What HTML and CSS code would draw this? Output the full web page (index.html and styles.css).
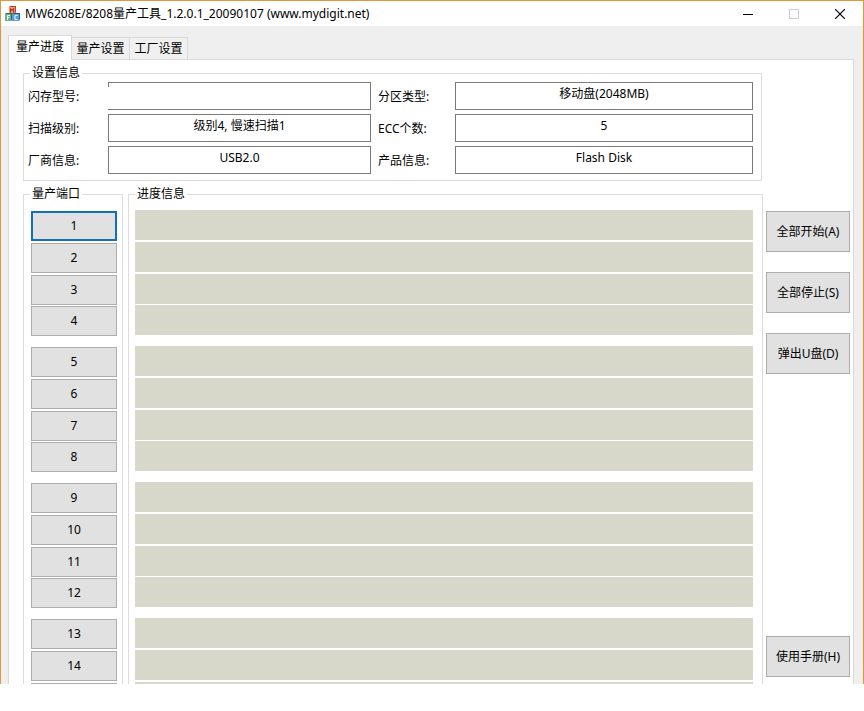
FILE: index.html
```
<!DOCTYPE html>
<html lang="zh-CN">
<head>
  <meta charset="UTF-8" />
  <meta name="viewport" content="width=device-width, initial-scale=1.0"/>
  <title>MW6208E/8208量产工具</title>
  <link rel="stylesheet" href="styles.css">
</head>
<body>

  <div class="window">
    <header class="title-bar">
      <svg class="app-icon" width="16" height="16" viewBox="0 0 16 16" aria-hidden="true">
        <path d="M4 1l1-1h6v6l-1 2H4z" fill="#a8472a"/>
        <rect x="4" y="1" width="6" height="7" fill="#f0976c"/>
        <path d="M5.500 6.500v-4l1.500 2l1.500-2v4" fill="none" stroke="#b5281a"/>
        <path d="M0 8l1-1h6v7l-1 1H0z" fill="#2c6b55"/>
        <rect x="0" y="8" width="6" height="7" fill="#69b095"/>
        <path d="M2.500 14v-4.500H5M2.500 11.500H4.500" fill="none" stroke="#eefae6"/>
        <path d="M7 8l1-1h7v6l-1 2H7z" fill="#2a5f96"/>
        <rect x="7" y="8" width="7" height="7" fill="#5a9fd8"/>
        <path d="M12.500 9.500h-2.500v4h2.500" fill="none" stroke="#eef8ff"/>
      </svg>
      <h1>MW6208E/8208量产工具_1.2.0.1_20090107 (www.mydigit.net)</h1>
      <div class="window-buttons">
        <button type="button" aria-label="最小化">
          <svg width="10" height="10" viewBox="0 0 10 10"><path d="M0 5.500H10" stroke="#000"/></svg>
        </button>
        <button type="button" aria-label="最大化" disabled>
          <svg width="10" height="10" viewBox="0 0 10 10"><path d="M.5.5h9v9h-9z" fill="none" stroke="#ccc"/></svg>
        </button>
        <button type="button" aria-label="关闭">
          <svg width="10" height="10" viewBox="0 0 10 10"><path d="M0 0L10 10M10 0L0 10" stroke="#000" stroke-width="1.200"/></svg>
        </button>
      </div>
    </header>

    <nav class="tabs" role="tablist">
      <button type="button" role="tab" class="tab active" aria-selected="true">量产进度</button>
      <button type="button" role="tab" class="tab" aria-selected="false">量产设置</button>
      <button type="button" role="tab" class="tab" aria-selected="false">工厂设置</button>
    </nav>

    <main class="panel">
      <fieldset class="group settings">
        <legend>设置信息</legend>
        <div class="settings-grid">
          <label for="flashType">闪存型号:</label>
          <input type="text" id="flashType" class="flash-type" readonly>
          <label for="partition">分区类型:</label>
          <input type="text" id="partition" value="移动盘(2048MB)" readonly>

          <label for="scanLevel">扫描级别:</label>
          <input type="text" id="scanLevel" value="级别4, 慢速扫描1" readonly>
          <label for="eccCount">ECC个数:</label>
          <input type="text" id="eccCount" value="5" readonly>

          <label for="vendor">厂商信息:</label>
          <input type="text" id="vendor" value="USB2.0" readonly>
          <label for="product">产品信息:</label>
          <input type="text" id="product" value="Flash Disk" readonly>
        </div>
      </fieldset>

      <div class="work-area">
        <fieldset class="group ports">
          <legend>量产端口</legend>
          <div class="slots">
            <button type="button" class="slot current">1</button>
            <button type="button" class="slot">2</button>
            <button type="button" class="slot">3</button>
            <button type="button" class="slot">4</button>
            <button type="button" class="slot">5</button>
            <button type="button" class="slot">6</button>
            <button type="button" class="slot">7</button>
            <button type="button" class="slot">8</button>
            <button type="button" class="slot">9</button>
            <button type="button" class="slot">10</button>
            <button type="button" class="slot">11</button>
            <button type="button" class="slot">12</button>
            <button type="button" class="slot">13</button>
            <button type="button" class="slot">14</button>
            <button type="button" class="slot"></button>
          </div>
        </fieldset>

        <fieldset class="group progress">
          <legend>进度信息</legend>
          <div class="slots">
            <div class="slot"></div>
            <div class="slot"></div>
            <div class="slot"></div>
            <div class="slot"></div>
            <div class="slot"></div>
            <div class="slot"></div>
            <div class="slot"></div>
            <div class="slot"></div>
            <div class="slot"></div>
            <div class="slot"></div>
            <div class="slot"></div>
            <div class="slot"></div>
            <div class="slot"></div>
            <div class="slot"></div>
            <div class="slot"></div>
          </div>
        </fieldset>

        <div class="actions">
          <button type="button">全部开始(A)</button>
          <button type="button">全部停止(S)</button>
          <button type="button">弹出U盘(D)</button>
          <button type="button" class="manual">使用手册(H)</button>
        </div>
      </div>
    </main>
  </div>

</body>
</html>
```
FILE: styles.css
```
* { box-sizing: border-box; }
body {
  margin: 0;
  background: #fff;
  color: #000;
  font: 12px/16px "Noto Sans", "Noto Sans CJK SC", sans-serif;
}
button, input {
  font: inherit;
  color: inherit;
  border-radius: 0;
  padding: 0;
  margin: 0;
}

/* window frame, runs past its visible bottom edge */
.window {
  display: flex;
  flex-direction: column;
  height: calc(100vh - 27px);
  min-height: 400px;
  overflow: hidden;
  border: 1px solid #e29640;
  border-bottom: none;
  background: #efefef;
}
.title-bar {
  display: flex;
  align-items: center;
  flex: none;
  height: 25px;
  padding-left: 4px;
  background: #fff;
}
.app-icon {
  flex: none;
  margin-right: 4px;
}
.title-bar h1 {
  flex: 1;
  margin: 0;
  font-size: 12px;
  font-weight: normal;
  white-space: nowrap;
}
.window-buttons {
  display: flex;
}
.window-buttons button {
  display: flex;
  align-items: center;
  justify-content: center;
  width: 46px;
  height: 25px;
  border: none;
  background: none;
}

.tabs {
  display: flex;
  align-items: flex-end;
  flex: none;
  padding: 9px 7px 0;
}
.tab {
  width: 58px;
  height: 22px;
  border: 1px solid #d9d9d9;
  border-left: none;
  border-bottom: none;
  background: #f0f0f0;
  white-space: nowrap;
}
.tab.active {
  position: relative;
  width: 64px;
  height: 25px;
  margin-bottom: -1px;
  padding-bottom: 2px;
  border-left: 1px solid #d9d9d9;
  background: #fff;
}

.panel {
  display: flex;
  flex-direction: column;
  flex: 1;
  min-height: 0;
  margin: 0 9px 0 7px;
  padding: 5px 3px 0 14px;
  border: 1px solid #d9d9d9;
  border-bottom: none;
  background: #fff;
}
.group {
  min-width: 0;
  margin: 0;
  padding: 0;
  border: 1px solid #dcdcdc;
}
.group legend {
  margin-left: 6px;
  padding: 0 2px;
}
.settings {
  flex: none;
  margin-right: 88px;
}
.settings-grid {
  display: grid;
  grid-template-columns: 80px 263fr 84px 298fr;
  align-items: center;
  row-gap: 4px;
  padding: 1px 8px 6px 4px;
}
.settings-grid label {
  padding-top: 2px;
}
.settings-grid label:nth-of-type(even) {
  padding-left: 7px;
}
.settings-grid input {
  width: 100%;
  height: 28px;
  padding-bottom: 6px;
  border: 1px solid #7a7a7a;
  background: #fff;
  text-align: center;
  outline: none;
}
/* only the top end of the left edge is drawn */
.settings-grid .flash-type {
  border-left: none;
  background: linear-gradient(#7a7a7a, #7a7a7a) 0 0 / 1px 4px no-repeat;
}

.work-area {
  display: flex;
  flex: 1;
  min-height: 0;
  margin-top: 5px;
}
.ports, .progress {
  align-self: flex-start;
}
.ports {
  flex: none;
  width: 100px;
  margin-right: 5px;
}
.progress {
  flex: 1;
  margin-right: 3px;
}
.slots {
  display: flex;
  flex-direction: column;
  gap: 1px;
  padding: 9px 5px 9px 7px;
}
.progress .slots {
  padding: 8px 9px 9px 6px;
}
.slot {
  flex: none;
  height: 30px;
  margin-bottom: 1px;
}
.slot:nth-child(4n+3) {
  margin-bottom: 0;
}
.slot:nth-child(4n) {
  margin-bottom: 10px;
}
.ports .slot, .actions button {
  border: 1px solid #adadad;
  background: #e1e1e1;
}
.ports .slot.current {
  border: 2px solid #0f71b9;
}
.progress .slot {
  background: #d7d8c9;
}

.actions {
  display: flex;
  flex-direction: column;
  flex: none;
  gap: 20px;
  width: 84px;
  padding: 25px 0 7px;
}
.actions button {
  flex: none;
  height: 41px;
  white-space: nowrap;
}
.actions .manual {
  margin-top: auto;
}
```
